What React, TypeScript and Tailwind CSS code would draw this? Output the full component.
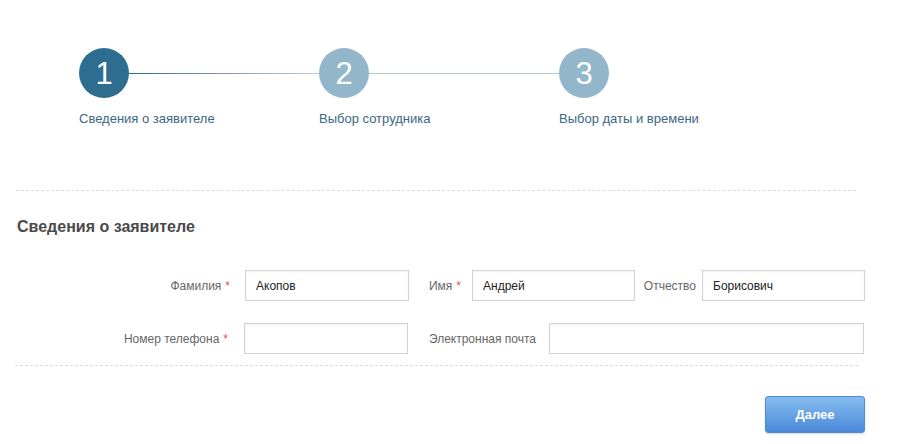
import React from 'react';

const steps = [
  { n: 1, label: 'Сведения о заявителе', active: true },
  { n: 2, label: 'Выбор сотрудника', active: false },
  { n: 3, label: 'Выбор даты и времени', active: false },
];

const Field = ({ value = '', width }: { value?: string; width: string }) => (
  <input
    type="text"
    defaultValue={value}
    className={`h-[31px] ${width} rounded-none border border-[#d3d3d3] bg-white pl-[10px] text-[12px] text-[#222] shadow-[inset_0_1px_2px_rgba(0,0,0,0.06)] outline-none`}
  />
);

const Req = () => <span className="ml-[4px] text-[#d9534f]">*</span>;

export default function App() {
  return (
    <div className="h-[444px] w-[902px] bg-white font-['Liberation_Sans',Arial,sans-serif]">
      {/* wizard steps */}
      <div className="flex pl-[79px] pt-[48px]">
        {steps.map((s, i) => (
          <div key={s.n} className="w-[240px]">
            <div className="flex items-center">
              <div
                className={`flex h-[50px] w-[50px] shrink-0 items-center justify-center rounded-full text-[31px] leading-none text-white ${s.active ? 'bg-[#2c6d90]' : 'bg-[#93b6ca]'}`}
              >
                {s.n}
              </div>
              {i < steps.length - 1 && (
                <div
                  className={`h-px flex-1 ${s.active ? 'bg-gradient-to-r from-[#2c6d90] to-[#c3ccd3]' : 'bg-[#b9c6cf]'}`}
                />
              )}
            </div>
            <div className="mt-[13px] text-[13px] leading-[16px] text-[#3b6784]">{s.label}</div>
          </div>
        ))}
      </div>

      <div className="mx-[16px] mt-[63px] w-[840px] border-t border-dashed border-[#dcdcdc]" />

      <h2 className="ml-[17px] mt-[26px] text-[16px] font-bold leading-[20px] text-[#4a4a4a]">Сведения о заявителе</h2>

      {/* form */}
      <div className="mt-[33px] text-[12px] text-[#666]">
        <div className="flex items-center pl-[16px]">
          <div className="w-[229px] pr-[15px] text-right">
            Фамилия<Req />
          </div>
          <Field value="Акопов" width="w-[164px]" />
          <div className="w-[63px] pr-[11px] text-right">
            Имя<Req />
          </div>
          <Field value="Андрей" width="w-[163px]" />
          <div className="w-[67px] pr-[6px] text-right">Отчество</div>
          <Field value="Борисович" width="w-[163px]" />
        </div>
        <div className="mt-[22px] flex items-center pl-[16px]">
          <div className="w-[228px] pr-[16px] text-right">
            Номер телефона<Req />
          </div>
          <Field width="w-[164px]" />
          <div className="w-[141px] pr-[13px] text-right">Электронная почта</div>
          <Field width="w-[315px]" />
        </div>
      </div>

      <div className="ml-[15px] mt-[11px] w-[843px] border-t border-dashed border-[#dcdcdc]" />

      <div className="flex justify-end pr-[37px] pt-[30px]">
        <button className="h-[37px] w-[100px] rounded-[3px] border border-[#4f8bd0] bg-gradient-to-b from-[#86bdf0] to-[#4a88d8] text-[13px] font-bold text-white shadow-[0_1px_2px_rgba(0,0,0,0.15)]">
          Далее
        </button>
      </div>
    </div>
  );
}
